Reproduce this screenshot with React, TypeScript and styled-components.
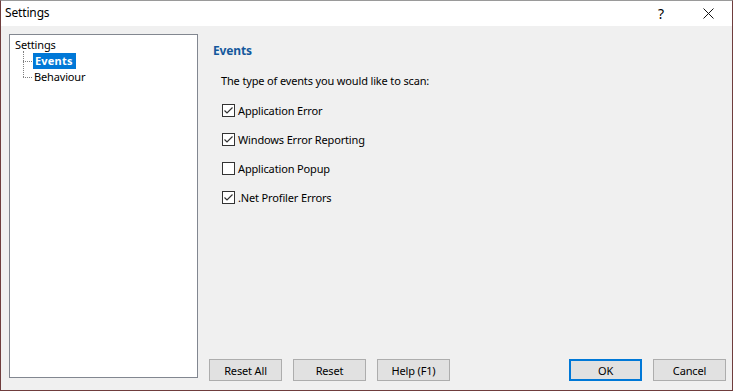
import React from "react";
import styled, { createGlobalStyle } from "styled-components";

const GlobalStyle = createGlobalStyle`
  html, body {
    margin: 0;
    padding: 0;
    background: #ffffff;
  }
  * {
    box-sizing: border-box;
  }
`;

type EventItem = {
  id: number;
  label: string;
  checked: boolean;
};

const events: EventItem[] = [
  { id: 1, label: "Application Error", checked: true },
  { id: 2, label: "Windows Error Reporting", checked: true },
  { id: 3, label: "Application Popup", checked: false },
  { id: 4, label: ".Net Profiler Errors", checked: true },
];

function CheckMark() {
  return (
    <svg width="11" height="11" viewBox="0 0 11 11">
      <path d="M1.5 5.5 L4 8 L9.5 2.5" fill="none" stroke="#333" strokeWidth="1.2" />
    </svg>
  );
}

function CloseIcon() {
  return (
    <svg width="11" height="11" viewBox="0 0 11 11">
      <path d="M0.5 0.5 L10.5 10.5 M10.5 0.5 L0.5 10.5" stroke="#111" strokeWidth="1" />
    </svg>
  );
}

export default function App() {
  return (
    <>
      <GlobalStyle />
      <Window>
        <TitleBar>
          <Title>Settings</Title>
          <TitleButtons>
            <HelpMark>?</HelpMark>
            <CloseBox>
              <CloseIcon />
            </CloseBox>
          </TitleButtons>
        </TitleBar>
        <Body>
          <Tree>
            <TreeRoot>Settings</TreeRoot>
            <TreeChildren>
              <TreeItem>
                <Branch />
                <TreeLabel selected>Events</TreeLabel>
              </TreeItem>
              <TreeItem last>
                <Branch />
                <TreeLabel>Behaviour</TreeLabel>
              </TreeItem>
            </TreeChildren>
          </Tree>
          <Main>
            <Content>
              <Heading>Events</Heading>
              <Intro>The type of events you would like to scan:</Intro>
              <CheckList>
                {events.map((item) => (
                  <CheckRow key={item.id}>
                    <Box>{item.checked && <CheckMark />}</Box>
                    <CheckLabel>{item.label}</CheckLabel>
                  </CheckRow>
                ))}
              </CheckList>
            </Content>
            <ButtonBar>
              <ButtonGroup>
                <Button>Reset All</Button>
                <Button>Reset</Button>
                <Button>Help (F1)</Button>
              </ButtonGroup>
              <ButtonGroup>
                <Button primary>OK</Button>
                <Button>Cancel</Button>
              </ButtonGroup>
            </ButtonBar>
          </Main>
        </Body>
      </Window>
    </>
  );
}

const Window = styled.div`
  width: 733px;
  height: 391px;
  display: flex;
  flex-direction: column;
  border: 1px solid #6f3d3d;
  border-top-color: #9a9a9a;
  font-family: "Segoe UI", "Noto Sans", sans-serif;
  font-size: 11px;
  letter-spacing: -0.15px;
  color: #000;
  background: #f0f0f0;
`;

const TitleBar = styled.div`
  height: 25px;
  background: #ffffff;
  display: flex;
  align-items: center;
  justify-content: space-between;
  padding-left: 4px;
`;

const Title = styled.div`
  font-size: 12px;
  margin-top: -2px;
`;

const TitleButtons = styled.div`
  display: flex;
  align-items: center;
  height: 100%;
`;

const HelpMark = styled.div`
  width: 46px;
  text-align: center;
  font-size: 14px;
  margin-right: 2px;
`;

const CloseBox = styled.div`
  width: 46px;
  display: flex;
  justify-content: center;
  padding-right: 2px;
`;

const Body = styled.div`
  flex: 1;
  display: flex;
  padding: 8px 6px 9px 8px;
`;

const Tree = styled.div`
  width: 189px;
  height: 344px;
  background: #ffffff;
  border: 1px solid #828790;
  padding: 2px 0 0 5px;
  line-height: 16px;
`;

const TreeRoot = styled.div`
  padding-left: 0;
`;

const TreeChildren = styled.div`
  position: relative;
  padding-left: 8px;
`;

const TreeItem = styled.div<{ last?: boolean }>`
  display: flex;
  align-items: center;
  height: 16px;
  position: relative;
  &::before {
    content: "";
    position: absolute;
    left: 0;
    top: ${(p) => (p.last ? "-8px" : "-2px")};
    height: ${(p) => (p.last ? "16px" : "18px")};
    border-left: 1px dotted #808080;
  }
`;

const Branch = styled.span`
  width: 9px;
  border-top: 1px dotted #808080;
  margin-right: 1px;
`;

const TreeLabel = styled.span<{ selected?: boolean }>`
  padding: ${(p) => (p.selected ? "0 3px 0 2px" : "0 2px 0 1px")};
  line-height: 16px;
  font-weight: ${(p) => (p.selected ? 700 : 400)};
  letter-spacing: ${(p) => (p.selected ? "0.2px" : "-0.15px")};
  color: ${(p) => (p.selected ? "#ffffff" : "#000")};
  background: ${(p) => (p.selected ? "#0078d7" : "transparent")};
`;

const Main = styled.div`
  flex: 1;
  display: flex;
  flex-direction: column;
  margin-left: 11px;
`;

const Content = styled.div`
  flex: 1;
  padding: 9px 0 0 4px;
`;

const Heading = styled.div`
  font-weight: 700;
  color: #14589c;
  font-size: 12px;
  line-height: 16px;
`;

const Intro = styled.div`
  margin: 14px 0 0 8px;
  line-height: 16px;
`;

const CheckList = styled.div`
  display: flex;
  flex-direction: column;
  gap: 16px;
  margin: 15px 0 0 9px;
`;

const CheckRow = styled.div`
  display: flex;
  align-items: center;
  height: 13px;
`;

const Box = styled.div`
  width: 13px;
  height: 13px;
  border: 1px solid #333;
  background: #ffffff;
  display: flex;
  align-items: center;
  justify-content: center;
  margin-right: 3px;
`;

const CheckLabel = styled.span`
  line-height: 16px;
`;

const ButtonBar = styled.div`
  display: flex;
  justify-content: space-between;
  align-items: flex-end;
`;

const ButtonGroup = styled.div`
  display: flex;
  gap: 11px;
`;

const Button = styled.button<{ primary?: boolean }>`
  width: 73px;
  height: 22px;
  font-family: inherit;
  font-size: 11px;
  letter-spacing: -0.15px;
  color: #000;
  background: #e1e1e1;
  border: ${(p) => (p.primary ? "2px solid #0078d7" : "1px solid #adadad")};
  padding: 0;
`;
